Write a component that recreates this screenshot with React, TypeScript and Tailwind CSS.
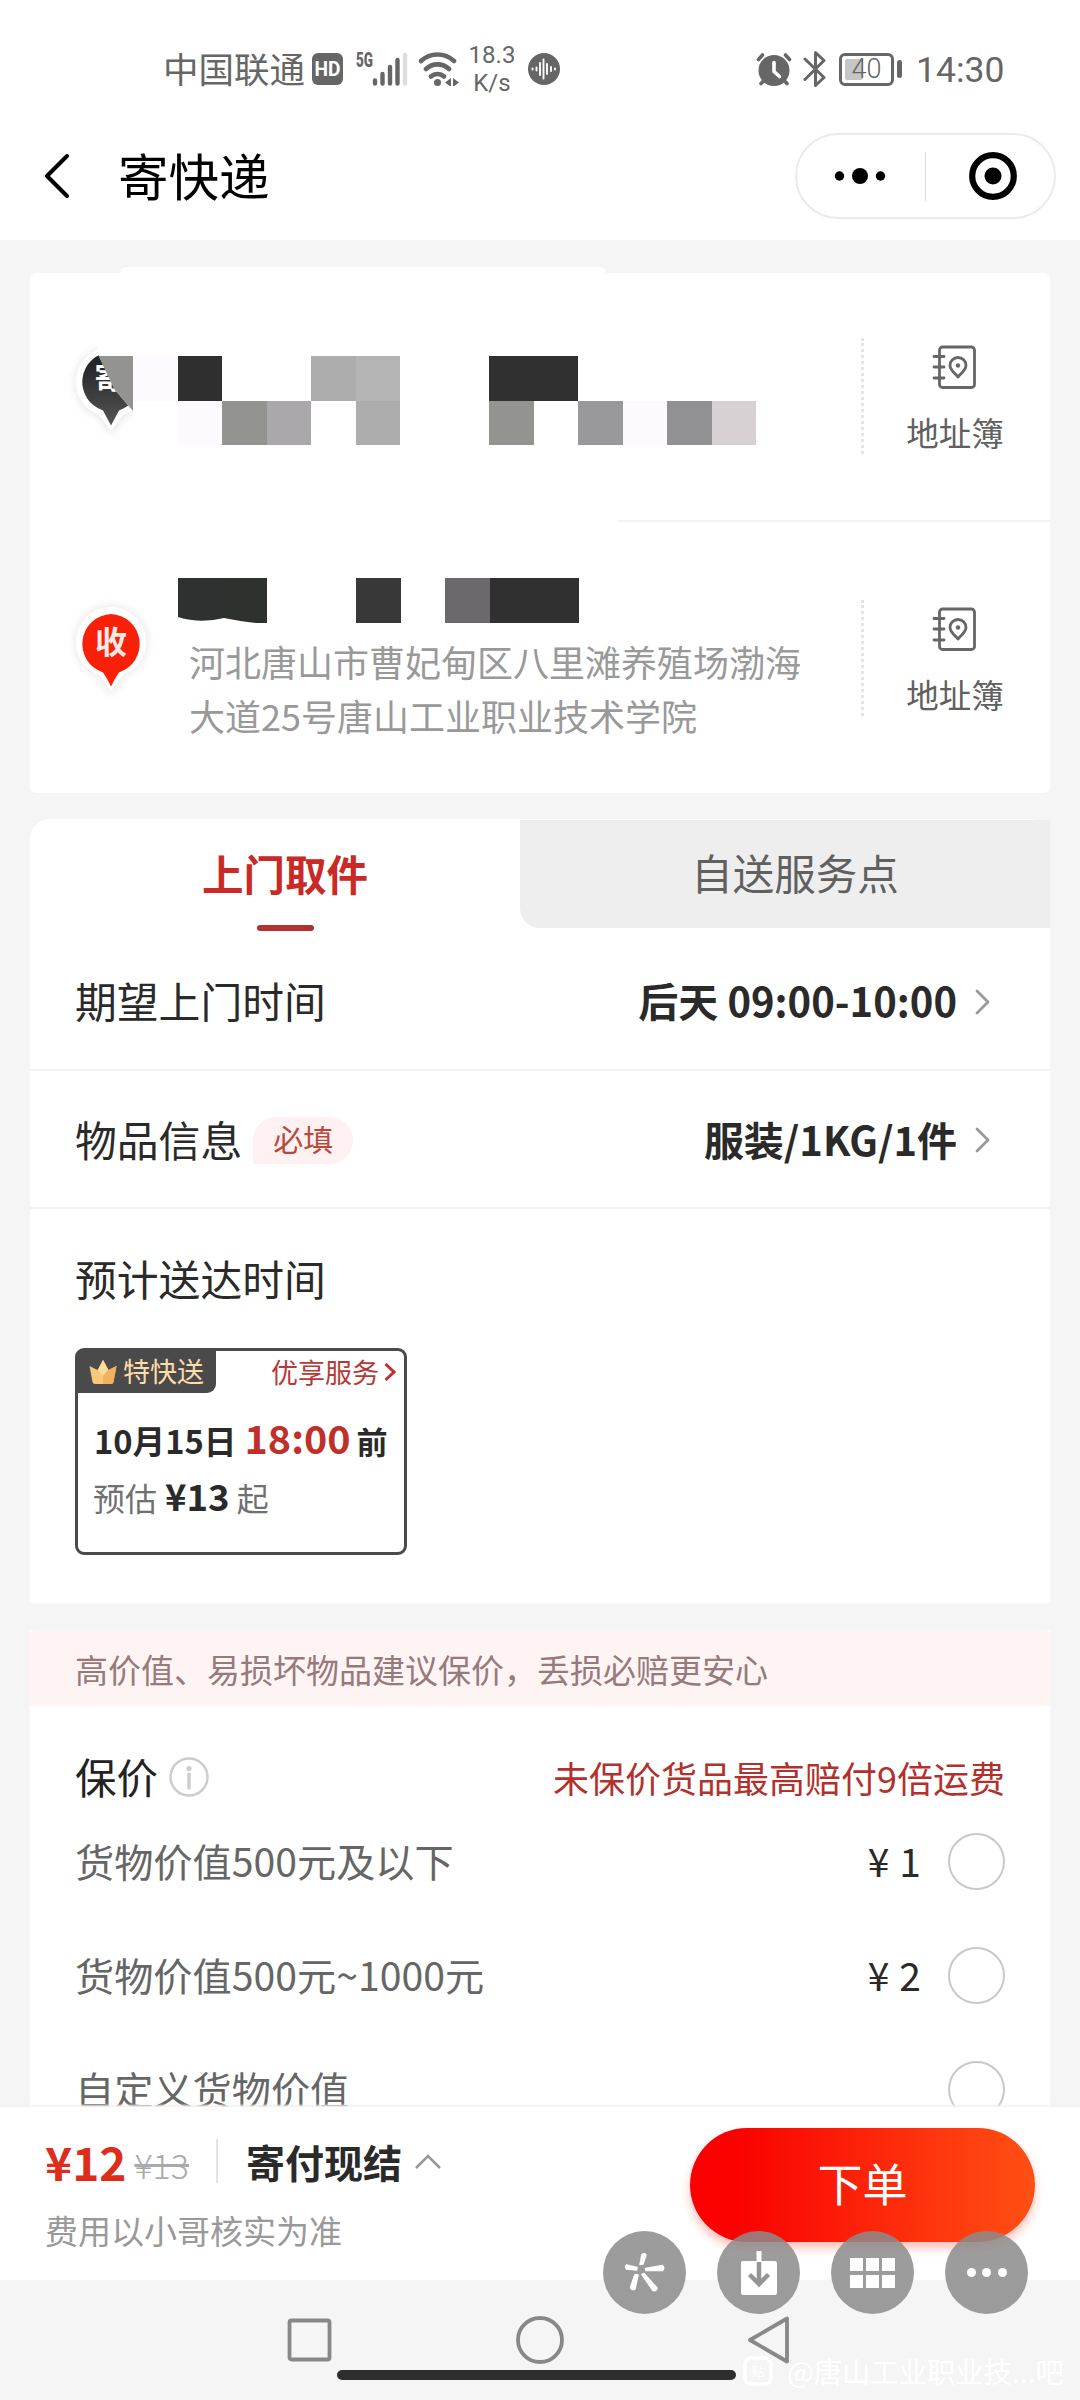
import { useState } from 'react';

// Colours of the censored blocks, one entry per cell ('' = nothing drawn)
const senderCells = [
  '#fdfaff', '#2f2f2f', '', '', '#adadad', '#b4b4b4', '', '', '#303030', '#303030', '', '', '', '',
  '', '#fdfaff', '#939390', '#aaa8ab', '', '#adadad', '', '', '#939390', '', '#99989a', '#fdfaff', '#919092', '#d7d1d4',
];
const receiverCells = ['#2f3030', '#2e322f', '', '', '#383838', '', '#6b696c', '#303030', '#303030'];

const insuranceOptions = [
  { label: '货物价值500元及以下', price: '1' },
  { label: '货物价值500元~1000元', price: '2' },
  { label: '自定义货物价值', price: '' },
];

function StatusBar() {
  return (
    <div className="flex h-[112px] items-center pt-[26px] text-[#666]">
      <span className="-mt-[2px] ml-[163px] w-[149px] whitespace-nowrap text-[35.5px] leading-[54px]">中国联通</span>
      <svg className="h-8 w-[31px]" viewBox="0 0 31 32">
        <rect width="31" height="32" rx="6" fill="#666" />
        <text x="15.5" y="23" textAnchor="middle" fontFamily="Roboto, sans-serif" fontWeight="700" fontSize="20" textLength="26" lengthAdjust="spacingAndGlyphs" fill="#fff">HD</text>
      </svg>
      <svg className="ml-[12px] h-[34px] w-[54px] overflow-visible" viewBox="0 0 54 34">
        <text x="1" y="15" fontFamily="Roboto, sans-serif" fontWeight="900" fontSize="20" textLength="17" lengthAdjust="spacingAndGlyphs" fill="#666">5G</text>
        <g stroke="#666" strokeWidth="4.4" strokeLinecap="round">
          <path d="M20 28.500v3M27.500 22v9.500M35 15v16.500M42.500 8v23.500" />
          <path d="M50 3v28.500" stroke="#ddd" />
        </g>
      </svg>
      <svg className="ml-[9px] h-[34px] w-[41px]" viewBox="0 0 41 34" fill="none" stroke="#666" strokeWidth="4.600" strokeLinecap="round">
        <path d="M3 9a24 24 0 0 1 33 0M8 17a16.500 16.500 0 0 1 23 0M13 24.500a9.500 9.500 0 0 1 13 0" />
        <circle cx="19.500" cy="30.500" r="3.500" fill="#666" stroke="none" />
        <path d="M33 26v9l-6-4.500zM35 26v9l6-4.500z" fill="#666" stroke="none" />
      </svg>
      <div className="ml-[9px] w-[48px] text-center font-[Roboto] text-[24px] leading-[28px] -mt-[1px]">
        <div>18.3</div>
        <div>K/s</div>
      </div>
      <svg className="ml-[12px] h-8 w-8" viewBox="0 0 32 32">
        <circle cx="16" cy="16" r="16" fill="#666" />
        <path d="M4.500 15.500v1M8.500 14.500v3M12 10v12M15.500 6.500v19M19 11v10M23 14v4M27 15.500v1" stroke="#fff" strokeWidth="1.900" strokeLinecap="round" />
      </svg>

      <svg className="ml-auto h-[34px] w-[36px]" viewBox="0 0 36 34" fill="none" stroke="#666" strokeLinecap="round">
        <circle cx="18" cy="18.500" r="15.500" fill="#666" stroke="none" />
        <path d="M2.500 7.500l4-4.500M33.500 7.500l-4-4.500M5 31.500l3-3M31 31.500l-3-3" strokeWidth="3.600" />
        <path d="M18 10.500v9l5.500 5" stroke="#fff" strokeWidth="3.600" />
      </svg>
      <svg className="ml-[11px] h-[36px] w-[23px]" viewBox="0 0 23 36" fill="none" stroke="#666" strokeWidth="3" strokeLinecap="round" strokeLinejoin="round">
        <path d="M2 8l19 18.500-8.500 8v-33L21 9.500 2 28.500" />
      </svg>
      <div className="relative ml-[13px] flex h-[33px] w-[55px] items-center justify-center rounded-[6px] border-[3px] border-[#666]">
        <div className="absolute left-[3px] top-[3px] h-[21px] w-[18px] rounded-[2px] bg-[#c6c6c6]" />
        <span className="relative font-[Roboto] text-[27px] font-light leading-[27px]">40</span>
      </div>
      <div className="ml-[3px] h-[18px] w-[5px] rounded-full bg-[#666]" />
      <span className="ml-[14px] mr-[74px] mt-[2px] w-[90px] font-[Roboto] text-[35.5px] leading-[40px]">14:30</span>
    </div>
  );
}

function NavBar() {
  return (
    <div className="flex h-32 items-center">
      <svg className="ml-[43px] h-[46px] w-[27px]" viewBox="0 0 27 46" fill="none" stroke="#000" strokeWidth="4" strokeLinecap="round" strokeLinejoin="round">
        <path d="M24 3L4 23l20 20" />
      </svg>
      <h1 className="ml-[48px] -mt-[4px] text-[50.5px] leading-[60px] text-black">寄快递</h1>
      <div className="ml-auto mr-[24px] flex h-[86px] w-[261px] items-center rounded-full border-2 border-[#ebebeb]">
        <svg className="ml-[37px] h-[18px] w-[52px]" viewBox="0 0 52 18">
          <circle cx="5.500" cy="9" r="4.700" />
          <circle cx="26" cy="9" r="8" />
          <circle cx="46.500" cy="9" r="4.700" />
        </svg>
        <div className="ml-[39px] h-[49px] w-px bg-[#ddd]" />
        <svg className="ml-[43px] h-[48px] w-[48px]" viewBox="0 0 48 48">
          <circle cx="24" cy="24" r="20.800" fill="none" stroke="#000" strokeWidth="6.200" />
          <circle cx="24" cy="24" r="8.500" />
        </svg>
      </div>
    </div>
  );
}

function AddressBook() {
  return (
    <button className="flex w-[98px] flex-col items-center">
      <svg className="mr-[5px] h-[44px] w-[44px]" viewBox="0 0 44 44" fill="none" stroke="#666" strokeWidth="2.800" strokeLinecap="round" strokeLinejoin="round">
        <rect x="7.500" y="2" width="35" height="40.500" rx="3" />
        <path d="M2 11.500h10M2 22h10M2 33h10" />
        <path d="M26 32c-3-3.500-8-7-8-11.500a8 8 0 0 1 16 0C34 25 29 28.500 26 32z" />
        <circle cx="26" cy="20.500" r="2.200" fill="#666" stroke="none" />
      </svg>
      <span className="mr-[2px] mt-[23px] whitespace-nowrap text-[32.5px] leading-[40px] text-[#606060]">地址簿</span>
    </button>
  );
}

function Mosaic({ cells, columns }: { cells: string[]; columns: number }) {
  return (
    <div className="grid" style={{ gridTemplateColumns: `repeat(${columns}, 44.5px)`, gridAutoRows: '44.5px' }}>
      {cells.map((color, i) => (
        <div key={i} style={{ backgroundColor: color || 'transparent' }} />
      ))}
    </div>
  );
}

function SenderPin() {
  return (
    <svg className="h-[110px] w-[72px] overflow-visible" viewBox="0 0 72 110">
      <defs>
        <linearGradient id="pinDark" x1="0" y1="0" x2="0" y2="1">
          <stop offset="0" stopColor="#1d1d1d" />
          <stop offset="1" stopColor="#555" />
        </linearGradient>
        <clipPath id="pinCut">
          <path d="M-10-10H34L37.500 12 54 47 72 68 80 110H-10z" />
        </clipPath>
        <filter id="pinBlur" x="-30%" y="-30%" width="160%" height="160%">
          <feGaussianBlur stdDeviation="4" />
        </filter>
      </defs>
      <g clipPath="url(#pinCut)">
        <path d="M50 4a36 36 0 0 0-12 70l12 18 12-18A36 36 0 0 0 50 4z" fill="#d9d3da" opacity=".6" filter="url(#pinBlur)" />
        <path d="M50 4a35 35 0 0 0-12 68l12 16 12-16A35 35 0 0 0 50 4z" fill="#fff" />
        <path d="M50 9a30 30 0 0 0-8 58.500Q46 75 50 82.500q4-7.500 8-15A30 30 0 0 0 50 9z" fill="url(#pinDark)" />
        <text x="48" y="46" textAnchor="middle" fontSize="29" fontWeight="700" fill="#fff">寄</text>
      </g>
      <path d="M37.500 13H72v55L54 47z" fill="#939491" />
    </svg>
  );
}

function ReceiverPin() {
  return (
    <svg className="h-[110px] w-[100px] overflow-visible" viewBox="0 0 100 110">
      <path d="M50 4a36 36 0 0 0-12 70l12 20 12-20A36 36 0 0 0 50 4z" fill="#d9d3da" opacity=".6" filter="url(#pinBlur)" />
      <path d="M50 5a35 35 0 0 0-12 68l12 16 12-16A35 35 0 0 0 50 5z" fill="#fff" />
      <path d="M50 12a30 30 0 0 0-8 58.500Q46 76 50 84.500q4-8.500 8-14A30 30 0 0 0 50 12z" fill="#f9200a" />
      <text x="50" y="52" textAnchor="middle" fontSize="32" fontWeight="700" fill="#ffe9e4">收</text>
    </svg>
  );
}

function AddressCard() {
  return (
    <div className="px-[30px] pt-[27px]">
      <div className="ml-[90px] h-[6px] w-[486px] rounded-t-[20px] bg-white" />
      <div className="h-[520px] rounded-[6px] bg-white">
        <div className="flex h-[247px]">
          <div className="ml-[31px] mt-[70px]"><SenderPin /></div>
          <div className="mt-[83px]"><Mosaic cells={senderCells} columns={14} /></div>
          <div className="ml-auto mt-[65px] h-[116px] border-l-[3px] border-dotted border-[#e4e4e4]" />
          <div className="ml-[43px] mr-[45px] mt-[72px]"><AddressBook /></div>
        </div>
        <div className="ml-[588px] h-[2px] bg-[#f3f3f3]" />
        <div className="flex h-[271px]">
          <div className="ml-[31px] mt-[80px]"><ReceiverPin /></div>
          <div className="ml-[17px] mt-[56px]">
            <Mosaic cells={receiverCells} columns={9} />
            <svg className="-mt-[6px] block h-[6px] w-[90px]" viewBox="0 0 90 6" fill="#fff">
              <path d="M0 0Q22 7 46 1 66 5 78 6H0z" />
            </svg>
            <p className="ml-[11px] mt-[11px] w-[620px] text-[36px] leading-[54px] text-[#999]">
              河北唐山市曹妃甸区八里滩养殖场渤海大道25号唐山工业职业技术学院
            </p>
          </div>
          <div className="ml-auto mt-[78px] h-[116px] border-l-[3px] border-dotted border-[#e4e4e4]" />
          <div className="ml-[43px] mr-[45px] mt-[85px]"><AddressBook /></div>
        </div>
      </div>
    </div>
  );
}

function Chevron() {
  return (
    <svg className="ml-[18px] h-[26px] w-[16px]" viewBox="0 0 16 26" fill="none" stroke="#999" strokeWidth="2.800" strokeLinecap="round" strokeLinejoin="round">
      <path d="M2 2l11 11L2 24" />
    </svg>
  );
}

function PickupCard({ tab, setTab }: { tab: string; setTab: (t: string) => void }) {
  return (
    <div className="mx-[30px] mt-[26px] h-[784px] rounded-t-[20px] bg-white">
      <div className="flex h-[109px]">
        <button onClick={() => setTab('pickup')} className="flex w-[490px] flex-col items-center pl-[20px]">
          <span className="mt-[26px] text-[41.5px] font-bold leading-[56px] text-[#c92a26]">上门取件</span>
          {tab === 'pickup' && <span className="mt-[24px] h-[6px] w-[57px] shrink-0 rounded-full bg-[#b3312f]" />}
        </button>
        <button onClick={() => setTab('self')} className="mt-px flex h-[108px] flex-1 justify-center rounded-bl-[20px] bg-[#eee] pl-[20px]">
          <span className="mt-[24px] text-[41.5px] leading-[56px] text-[#606060]">自送服务点</span>
        </button>
      </div>
      <div className="flex h-[143px] items-center border-b-2 border-[#f3f3f3] pl-[45px] pr-[59px] pt-[6px] text-[#2a2a2a]">
        <span className="-mt-[3px] text-[41.8px] leading-[60px]">期望上门时间</span>
        <span className="-mt-[3px] ml-auto text-[40px] font-bold leading-[60px]">后天 09:00-10:00</span>
        <Chevron />
      </div>
      <div className="flex h-[138px] items-center border-b-2 border-[#f3f3f3] pl-[45px] pr-[59px] pt-[2px] text-[#2a2a2a]">
        <span className="-mt-[2px] text-[41.8px] leading-[60px]">物品信息</span>
        <span className="ml-[11px] h-[47px] rounded-[23px] rounded-bl-none bg-[#fff1f2] px-[20px] text-[30px] leading-[43px] text-[#b9493a]">必填</span>
        <span className="-mt-[2px] ml-auto text-[40px] font-bold leading-[60px]">服装/1KG/1件</span>
        <Chevron />
      </div>
      <div className="px-[45px] pt-[39px]">
        <div className="text-[41.8px] leading-[60px] text-[#2a2a2a]">预计送达时间</div>
        <div className="mt-[40px] h-[207px] w-[332px] rounded-[9px] border-[3px] border-[#4a4a4a]">
          <div className="flex h-[42px] items-center">
            <div className="-ml-px flex h-[42px] w-[139px] items-center rounded-br-[9px] rounded-tl-[5px] bg-[#4a4a4a] pl-[12px]">
              <svg className="h-[24px] w-[28px] shrink-0" viewBox="0 0 28 24">
                <path d="M.5 6l8 4L14 0l5.500 10 8-4-3 16q-.5 2-2.500 2H6q-2 0-2.500-2z" fill="#f9c778" />
                <path d="M14 0l5.500 10 8-4-3 16q-.5 2-2.500 2H14z" fill="#f0b35c" />
                <path d="M14 0l5 10-5 6-5-6z" fill="#fbdb9c" />
              </svg>
              <span className="-mt-[2px] ml-[6px] whitespace-nowrap text-[27px] leading-[40px] text-[#fcdcaa]">特快送</span>
            </div>
            <span className="ml-auto text-[27px] leading-[40px] text-[#b53a36]">优享服务</span>
            <svg className="ml-[5px] mr-[8px] h-[20px] w-[12px]" viewBox="0 0 12 20" fill="none" stroke="#c0302c" strokeWidth="3">
              <path d="M1.500 2L10 10l-8.500 8" />
            </svg>
          </div>
          <div className="mt-[16px] flex items-baseline whitespace-nowrap pl-[16px] text-[32.700px] font-bold leading-[56px] text-[#2a2a2a]">
            10月15日
            <span className="ml-[8px] text-[39.500px] leading-[56px] text-[#c0302a]">18:00</span>
            <span className="ml-[6px] text-[31px]">前</span>
          </div>
          <div className="-mt-[1px] flex items-baseline pl-[15px] text-[32px] leading-[56px] text-[#707070]">
            预估
            <span className="ml-[8px] text-[36.500px] font-bold leading-[56px] text-[#2a2a2a]">¥13</span>
            <span className="ml-[7px]">起</span>
          </div>
        </div>
      </div>
    </div>
  );
}

function InsuranceCard({ selected, setSelected }: { selected: number; setSelected: (i: number) => void }) {
  return (
    <div className="mx-[30px] mt-[28px] bg-white">
      <div className="h-[75px] rounded-t-[4px] bg-[#fff4f4] pl-[45px] text-[33px] leading-[76px] text-[#967a7c]">
        高价值、易损坏物品建议保价，丢损必赔更安心
      </div>
      <div className="flex h-[98px] items-center pl-[45px] pr-[45px] pt-[44px]">
        <span className="-mt-[2px] text-[41.5px] leading-[54px] text-[#222]">保价</span>
        <svg className="ml-[11px] h-[40px] w-[40px]" viewBox="0 0 40 40" fill="none" stroke="#ccc" strokeWidth="2.400">
          <circle cx="20" cy="20" r="18.500" />
          <path d="M20 17v14" strokeWidth="3.400" strokeLinecap="round" />
          <circle cx="20" cy="11.500" r="2.600" fill="#ccc" stroke="none" />
        </svg>
        <span className="-mt-[1px] ml-auto text-[36px] leading-[54px] text-[#b3312c]">未保价货品最高赔付9倍运费</span>
      </div>
      {insuranceOptions.map((o, i) => (
        <div key={o.label} onClick={() => setSelected(i)} className="flex h-[114px] items-center pl-[45px] pr-[45px]">
          <span className="-mt-[2px] text-[39.2px] leading-[54px] text-[#666]">{o.label}</span>
          {o.price && (
            <span className="-mt-[3px] ml-auto mr-[27px] flex gap-[10px] text-[39px] leading-[54px] text-[#2a2a2a]">
              <span>¥</span>
              <span>{o.price}</span>
            </span>
          )}
          <span className={`h-[57px] w-[57px] rounded-full border-[2.500px] ${o.price ? '' : 'ml-auto'} ${selected === i ? 'border-[#c92a26]' : 'border-[#c9c9c9]'}`} />
        </div>
      ))}
    </div>
  );
}

function FloatingTools() {
  const circle = 'flex h-[83px] w-[83px] items-center justify-center rounded-full bg-[#8c8b8b]/85';
  return (
    <div className="absolute left-[603px] top-[2231px] flex gap-[31px]">
      <div className={circle}>
        <svg className="h-[42px] w-[42px]" viewBox="0 0 42 42" fill="#fff" stroke="#fff" strokeWidth="1.500" strokeLinejoin="round">
          <path d="M18 2.500q3-2 4 .5L19 12l-3 .5zM2.500 13q-2 2 0 4l10 1 .5-2.500zM38.500 13.500q2.500 2.500 0 5L22 18.500l-.5-2zM20 21.500l13 14.500q-.5 3.500-4 2.500L18 22.500zM11 22.500L6.500 35.500q1 3 4.500 1.500l3-14z" />
        </svg>
      </div>
      <div className={circle}>
        <svg className="h-[46px] w-[38px]" viewBox="0 0 38 46" fill="none">
          <path d="M3 11h32q2 0 2 2v30q0 2-2 2H3q-2 0-2-2V13q0-2 2-2z" fill="#fff" />
          <path d="M19 1v11" stroke="#fff" strokeWidth="5" />
          <path d="M19 12v21M9.500 24.500L19 34l9.500-9.500" stroke="#969595" strokeWidth="4.500" />
        </svg>
      </div>
      <div className={circle}>
        <div className="grid grid-cols-3 gap-x-[3px] gap-y-[4px]">
          {[0, 1, 2, 3, 4, 5].map((n) => (
            <div key={n} className="h-[13px] w-[13px] bg-white" />
          ))}
        </div>
      </div>
      <div className={circle}>
        <div className="flex gap-[6.5px]">
          {[0, 1, 2].map((n) => (
            <div key={n} className="h-[9px] w-[9px] rounded-full bg-white" />
          ))}
        </div>
      </div>
    </div>
  );
}

function SubmitBar() {
  return (
    <div className="flex h-[173px] bg-white shadow-[0_-2px_2px_#f5f0f1]">
      <div className="ml-[45px] mt-[24px]">
        <div className="flex h-[60px] items-center whitespace-nowrap">
          <span className="text-[46px] font-bold leading-[60px] text-[#dd2e1c]">¥12</span>
          <span className="ml-[8px] mt-[8px] text-[34px] font-light leading-[50px] text-[#aaa] line-through">¥13</span>
          <span className="ml-[27px] h-[44px] w-[2px] bg-[#e4e4e4]" />
          <span className="ml-[28px] text-[39px] font-bold leading-[60px] text-[#2a2a2a]">寄付现结</span>
          <svg className="ml-[12px] mt-[2px] h-[16px] w-[28px]" viewBox="0 0 28 16" fill="none" stroke="#999" strokeWidth="2.600">
            <path d="M2 14L14 2l12 12" />
          </svg>
        </div>
        <div className="mt-[15px] text-[33px] leading-[48px] text-[#999]">费用以小哥核实为准</div>
      </div>
      <button className="ml-auto mr-[45px] mt-[21px] h-[114px] w-[345px] rounded-full bg-[linear-gradient(90deg,#fa0000_12%,#ff5014)] pb-[4px] text-[45px] leading-[60px] text-white shadow-[0_6px_10px_rgba(255,40,20,0.3)]">
        下单
      </button>
    </div>
  );
}

function SystemNav() {
  return (
    <div className="h-[120px] bg-[#f5f5f5] pt-[36px]">
      <div className="flex items-center pl-[286px]">
        <svg className="h-[48px] w-[46px]" viewBox="0 0 46 48" fill="none" stroke="#888" strokeWidth="3.800">
          <rect x="3.500" y="4.500" width="40" height="39" rx="2" />
        </svg>
        <svg className="ml-[184px] h-[48px] w-[48px]" viewBox="0 0 48 48" fill="none" stroke="#888" strokeWidth="3.800">
          <circle cx="24" cy="24" r="22" />
        </svg>
        <svg className="ml-[183px] h-[48px] w-[43px]" viewBox="0 0 43 48" fill="none" stroke="#888" strokeWidth="3.800" strokeLinejoin="round">
          <path d="M40 2.500v43L3 24z" />
        </svg>
      </div>
      <div className="ml-[337px] mt-[6px] h-[10px] w-[399px] rounded-full bg-[#2e2e2e]" />
    </div>
  );
}

function Watermark() {
  return (
    <div className="absolute left-[743px] top-[2354px] flex items-center whitespace-nowrap text-white">
      <svg className="h-[30px] w-[30px]" viewBox="0 0 30 30">
        <rect x="2" y="2" width="26" height="26" rx="6" fill="none" stroke="#fff" strokeWidth="3.500" />
        <text x="15" y="20" textAnchor="middle" fontSize="13" fill="#fff">贴</text>
      </svg>
      <span className="ml-[14px] text-[28.3px] leading-[34px]">@唐山工业职业技...吧</span>
    </div>
  );
}

export default function App() {
  const [tab, setTab] = useState('pickup');
  const [selected, setSelected] = useState(-1);

  return (
    <div className="relative flex h-[2400px] w-[1080px] flex-col overflow-hidden bg-[#f5f5f5] font-['Noto_Sans_CJK_SC',sans-serif]">
      <header className="h-[240px] shrink-0 bg-white">
        <StatusBar />
        <NavBar />
      </header>
      <main className="h-[1867px] overflow-hidden">
        <AddressCard />
        <PickupCard tab={tab} setTab={setTab} />
        <InsuranceCard selected={selected} setSelected={setSelected} />
      </main>
      <footer className="shrink-0">
        <SubmitBar />
        <SystemNav />
      </footer>
      <FloatingTools />
      <Watermark />
    </div>
  );
}
